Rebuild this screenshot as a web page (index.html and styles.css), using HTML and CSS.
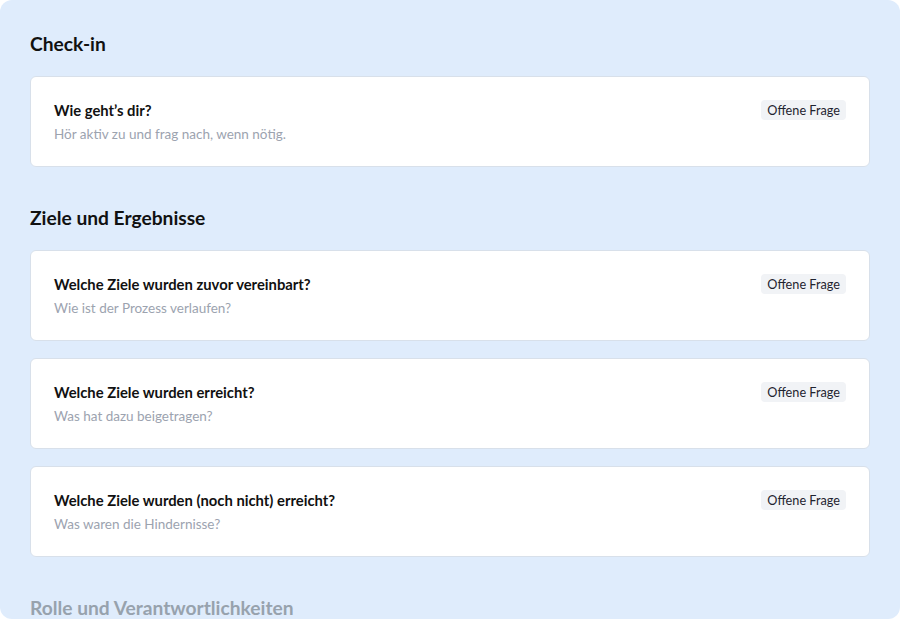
FILE: index.html
```html
<!DOCTYPE html>
<html lang="de">
<head>
    <meta charset="UTF-8">
    <meta name="viewport" content="width=device-width, initial-scale=1.0">
    <title>Mitarbeitergespräch</title>
    <link rel="stylesheet" href="styles.css">
</head>
<body>
    <div class="board">
        <h2 class="section-title">Check-in</h2>
        <div class="question">
            <div class="question-text">
                <div class="question-title">Wie geht’s dir?</div>
                <div class="question-hint">Hör aktiv zu und frag nach, wenn nötig.</div>
            </div>
            <span class="badge">Offene Frage</span>
        </div>

        <h2 class="section-title">Ziele und Ergebnisse</h2>
        <div class="question">
            <div class="question-text">
                <div class="question-title">Welche Ziele wurden zuvor vereinbart?</div>
                <div class="question-hint">Wie ist der Prozess verlaufen?</div>
            </div>
            <span class="badge">Offene Frage</span>
        </div>
        <div class="question">
            <div class="question-text">
                <div class="question-title">Welche Ziele wurden erreicht?</div>
                <div class="question-hint">Was hat dazu beigetragen?</div>
            </div>
            <span class="badge">Offene Frage</span>
        </div>
        <div class="question">
            <div class="question-text">
                <div class="question-title">Welche Ziele wurden (noch nicht) erreicht?</div>
                <div class="question-hint">Was waren die Hindernisse?</div>
            </div>
            <span class="badge">Offene Frage</span>
        </div>

        <h2 class="section-title faded">Rolle und Verantwortlichkeiten</h2>
    </div>
</body>
</html>
```

FILE: styles.css
```css
body {
    margin: 0;
    background-color: #ffffff;
    font-family: Lato, "Open Sans", sans-serif;
    color: #111;
}
.board {
    height: 619px;
    box-sizing: border-box;
    overflow: hidden;
    background-color: #dfecfc;
    border-radius: 12px;
    padding: 32px 30px 0 30px;
}
.section-title {
    margin: 0 0 20px 0;
    font-size: 19.2px;
    font-weight: 700;
    line-height: 24px;
    color: #111;
}
.question + .section-title {
    margin-top: 39px;
}
.section-title.faded {
    color: #97a2ad;
}
.question {
    display: flex;
    justify-content: space-between;
    align-items: flex-start;
    background-color: #fff;
    border: 1px solid #d8e0ea;
    border-radius: 6px;
    padding: 23px 23px 0 23px;
    height: 91px;
    box-sizing: border-box;
    margin-bottom: 17px;
}
.question:last-of-type {
    margin-bottom: 0;
}
.question-title {
    font-size: 14.8px;
    font-weight: 700;
    line-height: 20px;
    margin-bottom: 4px;
}
.question-hint {
    font-size: 13.5px;
    line-height: 20px;
    color: #9ca3af;
}
.badge {
    background-color: #f1f3f6;
    border-radius: 4px;
    padding: 2px 6px;
    font-size: 12.7px;
    line-height: 16px;
    color: #1f2430;
}
```
